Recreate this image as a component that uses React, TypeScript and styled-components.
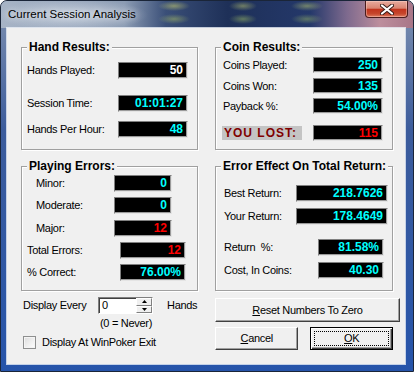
import React from 'react';
import styled, { createGlobalStyle } from 'styled-components';

type Tone = 'cyan' | 'white' | 'red';

interface Stat {
  label: string;
  value: string;
  tone: Tone;
  mt: number;
  pl: number;
  pr: number;
  w: number;
  lost?: boolean;
}

const toneColor: Record<Tone, string> = {
  cyan: '#00ffff',
  white: '#ffffff',
  red: '#ff0000',
};

const handStats: Stat[] = [
  { label: 'Hands Played:', value: '50', tone: 'white', mt: 14, pl: 5, pr: 9, w: 70 },
  { label: 'Session Time:', value: '01:01:27', tone: 'cyan', mt: 16, pl: 5, pr: 9, w: 70 },
  { label: 'Hands Per Hour:', value: '48', tone: 'cyan', mt: 9, pl: 5, pr: 9, w: 70 },
];

const coinStats: Stat[] = [
  { label: 'Coins Played:', value: '250', tone: 'cyan', mt: 9, pl: 7, pr: 9, w: 70 },
  { label: 'Coins Won:', value: '135', tone: 'cyan', mt: 5, pl: 7, pr: 9, w: 70 },
  { label: 'Payback %:', value: '54.00%', tone: 'cyan', mt: 4, pl: 7, pr: 9, w: 70 },
  { label: 'YOU LOST:', value: '115', tone: 'red', mt: 11, pl: 6, pr: 9, w: 70, lost: true },
];

const errorStats: Stat[] = [
  { label: 'Minor:', value: '0', tone: 'cyan', mt: 8, pl: 14, pr: 25, w: 58 },
  { label: 'Moderate:', value: '0', tone: 'cyan', mt: 5, pl: 14, pr: 25, w: 58 },
  { label: 'Major:', value: '12', tone: 'red', mt: 6, pl: 14, pr: 25, w: 58 },
  { label: 'Total Errors:', value: '12', tone: 'red', mt: 5, pl: 5, pr: 11, w: 66 },
  { label: '% Correct:', value: '76.00%', tone: 'cyan', mt: 5, pl: 5, pr: 11, w: 66 },
];

const effectStats: Stat[] = [
  { label: 'Best Return:', value: '218.7626', tone: 'cyan', mt: 18, pl: 8, pr: 4, w: 92 },
  { label: 'Your Return:', value: '178.4649', tone: 'cyan', mt: 6, pl: 8, pr: 4, w: 92 },
  { label: 'Return  %:', value: '81.58%', tone: 'cyan', mt: 14, pl: 8, pr: 8, w: 66 },
  { label: 'Cost, In Coins:', value: '40.30', tone: 'cyan', mt: 6, pl: 8, pr: 8, w: 66 },
];

const StatGroup: React.FC<{ title: string; stats: Stat[]; rowH: number }> = ({ title, stats, rowH }) => (
  <Group>
    <GroupTitle>{title}</GroupTitle>
    {stats.map((s) => (
      <Row key={s.label} $mt={s.mt} $pl={s.pl} $pr={s.pr} $h={rowH}>
        {s.lost ? <LostLabel>{s.label}</LostLabel> : <Label>{s.label}</Label>}
        <Value $w={s.w} $h={rowH} $color={toneColor[s.tone]}>{s.value}</Value>
      </Row>
    ))}
  </Group>
);

const App: React.FC = () => {
  return (
    <>
      <GlobalStyle />
      <Window>
        <TitleBar>
          <Title>Current Session Analysis</Title>
          <CloseButton>
            <svg width="14" height="11" viewBox="0 0 14 11">
              <path d="M2 1.5 L12 9.5 M12 1.5 L2 9.5" stroke="#3a1c18" strokeWidth="4" strokeLinecap="round" />
              <path d="M2 1.5 L12 9.5 M12 1.5 L2 9.5" stroke="#ffffff" strokeWidth="2.2" strokeLinecap="round" />
            </svg>
          </CloseButton>
        </TitleBar>
        <Body>
          <Client>
            <Groups>
              <StatGroup title="Hand Results:" stats={handStats} rowH={17} />
              <StatGroup title="Coin Results:" stats={coinStats} rowH={16} />
              <StatGroup title="Playing Errors:" stats={errorStats} rowH={17} />
              <StatGroup title="Error Effect On Total Return:" stats={effectStats} rowH={17} />
            </Groups>
            <Bottom>
              <Column>
                <SpinRow>
                  <SpinLabel>Display Every</SpinLabel>
                  <Spin>
                    <SpinInput>0</SpinInput>
                    <SpinButtons>
                      <SpinButton>
                        <svg width="7" height="4" viewBox="0 0 7 4"><path d="M3.5 0 L7 4 L0 4 Z" fill="#000" /></svg>
                      </SpinButton>
                      <SpinButton>
                        <svg width="7" height="4" viewBox="0 0 7 4"><path d="M0 0 L7 0 L3.5 4 Z" fill="#000" /></svg>
                      </SpinButton>
                    </SpinButtons>
                  </Spin>
                  <Label>Hands</Label>
                </SpinRow>
                <Never>(0 = Never)</Never>
                <CheckRow>
                  <CheckBox />
                  <Label>Display At WinPoker Exit</Label>
                </CheckRow>
              </Column>
              <Column>
                <Button $w={185} $h={24} $mt={7}>
                  <u>R</u>eset Numbers To Zero
                </Button>
                <ButtonRow>
                  <Button $w={84} $h={23} $mt={0}>
                    <u>C</u>ancel
                  </Button>
                  <OkButton $w={83} $h={23} $mt={0}>
                    <Focus>
                      <u>O</u>K
                    </Focus>
                  </OkButton>
                </ButtonRow>
              </Column>
            </Bottom>
          </Client>
        </Body>
      </Window>
    </>
  );
};

export default App;

const GlobalStyle = createGlobalStyle`
  body {
    margin: 0;
    background: #ffffff;
  }
  * {
    box-sizing: border-box;
  }
`;

const Window = styled.div`
  width: 414px;
  height: 372px;
  display: flex;
  flex-direction: column;
  border: 1px solid #1a2538;
  border-radius: 7px 7px 0 0;
  overflow: hidden;
  font-family: 'Liberation Sans', Arial, sans-serif;
  background: linear-gradient(180deg, #7f91b0 0%, #3c5c9c 35%, #2654aa 100%);
`;

const TitleBar = styled.div`
  height: 27px;
  flex-shrink: 0;
  display: flex;
  align-items: flex-start;
  justify-content: space-between;
  padding: 0 5px 0 7px;
  background:
    radial-gradient(ellipse 16px 5px at 173px 5px, rgba(200, 205, 110, 0.55), transparent),
    radial-gradient(ellipse 16px 5px at 173px 18px, rgba(170, 190, 100, 0.5), transparent),
    radial-gradient(ellipse 14px 5px at 242px 5px, rgba(190, 200, 110, 0.5), transparent),
    radial-gradient(ellipse 14px 5px at 242px 18px, rgba(160, 190, 100, 0.5), transparent),
    radial-gradient(ellipse 16px 5px at 306px 5px, rgba(190, 205, 110, 0.5), transparent),
    radial-gradient(ellipse 16px 5px at 306px 18px, rgba(160, 190, 100, 0.45), transparent),
    radial-gradient(ellipse 75px 16px at 72px 14px, rgba(215, 222, 232, 0.75), transparent),
    linear-gradient(90deg, #a7b4c6 0%, #8c9cb4 30%, #3a4f78 40%, #1e3058 55%, #24386a 75%, #7e6a8e 84%, #bd8e9c 92%, #a87688 100%);
`;

const Title = styled.div`
  font-size: 11.5px;
  line-height: 27px;
  color: #000000;
  text-shadow: 0 0 6px rgba(255, 255, 255, 0.9);
`;

const CloseButton = styled.div`
  width: 43px;
  height: 17px;
  display: flex;
  align-items: center;
  justify-content: center;
  border: 1px solid #4a1c1c;
  border-top: none;
  border-radius: 0 0 4px 4px;
  background: linear-gradient(180deg, #e8ab9e 0%, #d98471 45%, #c2341d 52%, #c6472d 80%, #df7d63 100%);
  box-shadow: inset 0 0 0 1px rgba(255, 220, 210, 0.4);
`;

const Body = styled.div`
  flex: 1;
  display: flex;
  padding: 0 8px 7px 6px;
`;

const Client = styled.div`
  flex: 1;
  display: flex;
  flex-direction: column;
  padding: 19px 0 0 14px;
  background: #f0f0f0;
  box-shadow: 0 0 0 1px rgba(235, 240, 248, 0.8);
  font-size: 11px;
  letter-spacing: -0.3px;
  color: #000000;
`;

const Groups = styled.div`
  display: grid;
  grid-template-columns: 177px 178px;
  grid-template-rows: 103px 125px;
  column-gap: 17px;
  row-gap: 16px;
`;

const Group = styled.div`
  position: relative;
  display: flex;
  flex-direction: column;
  border: 1px solid #a0a0a0;
  box-shadow: inset 1px 1px 0 #ffffff, 1px 1px 0 #ffffff;
`;

const GroupTitle = styled.span`
  position: absolute;
  top: -8px;
  left: 5px;
  padding: 0 2px;
  background: #f0f0f0;
  font-size: 12px;
  line-height: 14px;
  font-weight: bold;
  letter-spacing: 0;
`;

const Row = styled.div<{ $mt: number; $pl: number; $pr: number; $h: number }>`
  display: flex;
  align-items: center;
  justify-content: space-between;
  height: ${({ $h }) => $h}px;
  margin-top: ${({ $mt }) => $mt}px;
  padding-left: ${({ $pl }) => $pl}px;
  padding-right: ${({ $pr }) => $pr}px;
`;

const Label = styled.span`
  white-space: pre;
  line-height: 13px;
`;

const LostLabel = styled.span`
  width: 80px;
  height: 14px;
  padding-left: 2px;
  background: #c4c4c4;
  color: #800000;
  font-size: 12px;
  font-weight: bold;
  line-height: 14px;
  letter-spacing: 1px;
`;

const Value = styled.div<{ $w: number; $h: number; $color: string }>`
  width: ${({ $w }) => $w}px;
  height: ${({ $h }) => $h}px;
  padding-right: 4px;
  background: #000000;
  border: 1px solid;
  border-color: #808080 #e4e4e4 #e4e4e4 #808080;
  box-shadow: inset -1px -1px 0 #9a9a9a;
  color: ${({ $color }) => $color};
  font-size: 12px;
  font-weight: bold;
  letter-spacing: 0;
  line-height: ${({ $h }) => $h - 2}px;
  text-align: right;
`;

const Bottom = styled.div`
  display: grid;
  grid-template-columns: 177px 178px;
  column-gap: 17px;
`;

const Column = styled.div`
  display: flex;
  flex-direction: column;
`;

const SpinRow = styled.div`
  display: flex;
  align-items: center;
  height: 17px;
  margin-top: 6px;
  padding-left: 2px;
`;

const SpinLabel = styled.span`
  width: 75px;
  line-height: 13px;
`;

const Spin = styled.div`
  width: 55px;
  height: 17px;
  display: flex;
  margin-right: 14px;
  background: #ffffff;
  border: 1px solid;
  border-color: #808080 #ffffff #ffffff #808080;
  box-shadow: inset 1px 1px 0 #404040;
`;

const SpinInput = styled.div`
  flex: 1;
  padding: 1px 0 0 3px;
  line-height: 13px;
`;

const SpinButtons = styled.div`
  width: 16px;
  display: flex;
  flex-direction: column;
`;

const SpinButton = styled.div`
  flex: 1;
  display: flex;
  align-items: center;
  justify-content: center;
  background: #f0f0f0;
  border: 1px solid;
  border-color: #ffffff #808080 #808080 #ffffff;

  svg {
    width: 5px;
    height: 3px;
  }
`;

const Never = styled.div`
  margin-top: 3px;
  padding-left: 79px;
  line-height: 13px;
`;

const CheckRow = styled.div`
  display: flex;
  align-items: center;
  gap: 6px;
  height: 14px;
  margin-top: 5px;
  padding-left: 2px;
`;

const CheckBox = styled.div`
  width: 13px;
  height: 13px;
  border: 1px solid #8e8f8f;
  background: linear-gradient(135deg, #dcdcdc 0%, #ffffff 100%);
  box-shadow: inset 0 0 0 1px #f4f4f4;
`;

const ButtonRow = styled.div`
  display: flex;
  gap: 12px;
  margin-top: 5px;
`;

const Button = styled.div<{ $w: number; $h: number; $mt: number }>`
  width: ${({ $w }) => $w}px;
  height: ${({ $h }) => $h}px;
  margin-top: ${({ $mt }) => $mt}px;
  display: flex;
  align-items: center;
  justify-content: center;
  background: #f0f0f0;
  border: 1px solid;
  border-color: #ffffff #404040 #404040 #ffffff;
  box-shadow: inset -1px -1px 0 #a0a0a0;
  line-height: 13px;
`;

const OkButton = styled(Button)`
  padding: 3px;
  border: 1px solid #000000;
  box-shadow: inset 1px 1px 0 #ffffff, inset -1px -1px 0 #404040, inset -2px -2px 0 #a0a0a0;
`;

const Focus = styled.div`
  flex: 1;
  align-self: stretch;
  display: flex;
  align-items: center;
  justify-content: center;
  border: 1px dotted #000000;
`;
